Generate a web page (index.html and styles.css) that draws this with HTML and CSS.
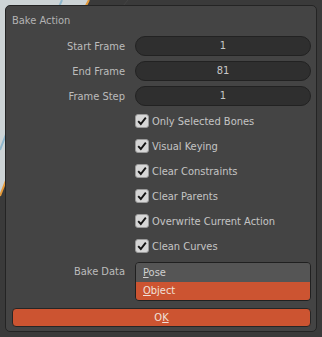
FILE: index.html
```html
<!DOCTYPE html>
<html lang="en">
<head>
    <meta charset="UTF-8">
    <meta name="viewport" content="width=device-width, initial-scale=1.0">
    <title>Bake Action</title>
    <link rel="stylesheet" href="styles.css">
</head>
<body>
    <!-- viewport left behind the popup -->
    <svg class="viewport" width="322" height="337" viewBox="0 0 322 337">
        <path d="M0 0 L89 0 Q40 90 0 196 Z" fill="#cdd4d6"/>
        <path d="M89 0 Q40 90 0 196" fill="none" stroke="#e59a3a" stroke-width="2"/>
        <path d="M62 0 Q30 70 0 150" fill="none" stroke="#8fb7cc" stroke-width="2"/>
        <path d="M128 0 L118 12" fill="none" stroke="#444" stroke-width="1"/>
    </svg>

    <div class="popup">
        <div class="title">Bake Action</div>

        <div class="rows">
            <div class="row">
                <span class="label">Start Frame</span>
                <div class="field">1</div>
            </div>
            <div class="row">
                <span class="label">End Frame</span>
                <div class="field">81</div>
            </div>
            <div class="row">
                <span class="label">Frame Step</span>
                <div class="field">1</div>
            </div>

            <div class="row">
                <span></span>
                <label class="check"><span class="box"><svg width="14" height="14" viewBox="0 0 14 14"><path d="M3.2 7.2 L5.8 10 L10.8 3.6" fill="none" stroke="#141414" stroke-width="1.9"/></svg></span>Only Selected Bones</label>
            </div>
            <div class="row">
                <span></span>
                <label class="check"><span class="box"><svg width="14" height="14" viewBox="0 0 14 14"><path d="M3.2 7.2 L5.8 10 L10.8 3.6" fill="none" stroke="#141414" stroke-width="1.9"/></svg></span>Visual Keying</label>
            </div>
            <div class="row">
                <span></span>
                <label class="check"><span class="box"><svg width="14" height="14" viewBox="0 0 14 14"><path d="M3.2 7.2 L5.8 10 L10.8 3.6" fill="none" stroke="#141414" stroke-width="1.9"/></svg></span>Clear Constraints</label>
            </div>
            <div class="row">
                <span></span>
                <label class="check"><span class="box"><svg width="14" height="14" viewBox="0 0 14 14"><path d="M3.2 7.2 L5.8 10 L10.8 3.6" fill="none" stroke="#141414" stroke-width="1.9"/></svg></span>Clear Parents</label>
            </div>
            <div class="row">
                <span></span>
                <label class="check"><span class="box"><svg width="14" height="14" viewBox="0 0 14 14"><path d="M3.2 7.2 L5.8 10 L10.8 3.6" fill="none" stroke="#141414" stroke-width="1.9"/></svg></span>Overwrite Current Action</label>
            </div>
            <div class="row">
                <span></span>
                <label class="check"><span class="box"><svg width="14" height="14" viewBox="0 0 14 14"><path d="M3.2 7.2 L5.8 10 L10.8 3.6" fill="none" stroke="#141414" stroke-width="1.9"/></svg></span>Clean Curves</label>
            </div>

            <div class="row data-row">
                <span class="label">Bake Data</span>
                <div class="choice">
                    <div class="item"><u>P</u>ose</div>
                    <div class="item selected"><u>O</u>bject</div>
                </div>
            </div>
        </div>

        <button class="ok">O<u>K</u></button>
    </div>
</body>
</html>
```

FILE: styles.css
```css
body {
    margin: 0;
    width: 322px;
    height: 337px;
    background-color: #3a3a3a;
    font-family: "DejaVu Sans Condensed", "DejaVu Sans", sans-serif;
    font-stretch: condensed;
    font-size: 11px;
    color: #c2c2c2;
    overflow: hidden;
    position: relative;
}

.viewport {
    position: absolute;
    left: 0;
    top: 0;
}

.popup {
    position: relative;
    box-sizing: border-box;
    margin: 5px 0 0 5px;
    width: 312px;
    height: 327px;
    padding: 0 5px 0 6px;
    background-color: #444444;
    border: 1px solid #242424;
    border-radius: 5px;
}

.title {
    padding: 8px 0 8px 0;
    line-height: 14px;
    color: #b3b3b3;
}

.rows {
    display: flex;
    flex-direction: column;
    gap: 5px;
}

.row {
    display: grid;
    grid-template-columns: 113px 1fr;
    column-gap: 10px;
    height: 20px;
    align-items: center;
}

.label {
    text-align: right;
    color: #bcbcbc;
}

.field {
    box-sizing: border-box;
    height: 20px;
    line-height: 18px;
    text-align: center;
    background-color: #2f2f2f;
    border: 1px solid #222222;
    border-radius: 10px;
    color: #c8c8c8;
}

.check {
    display: flex;
    align-items: center;
    gap: 3px;
    color: #c4c4c4;
}

.box {
    box-sizing: border-box;
    width: 14px;
    height: 14px;
    background-color: #d6d6d6;
    border: 1px solid #9a9a9a;
    border-radius: 3px;
    display: flex;
}

.box svg {
    margin: -1px;
}

.data-row {
    height: 39px;
    margin-top: 1px;
    align-items: start;
}

.data-row .label {
    line-height: 19px;
}

.choice {
    box-sizing: border-box;
    border: 1px solid #202020;
    border-radius: 4px;
    overflow: hidden;
}

.item {
    height: 19px;
    line-height: 19px;
    padding-left: 7px;
    background-color: #555555;
    color: #d0d0d0;
}

.item.selected {
    height: 18px;
    line-height: 18px;
    background-color: #cc5431;
    color: #f0e0da;
}

.ok {
    display: block;
    box-sizing: border-box;
    width: 100%;
    height: 19px;
    margin-top: 7px;
    padding: 0;
    font: inherit;
    line-height: 17px;
    color: #f0e0da;
    background-color: #cc5431;
    border: 1px solid #262626;
    border-radius: 4px;
}
```
